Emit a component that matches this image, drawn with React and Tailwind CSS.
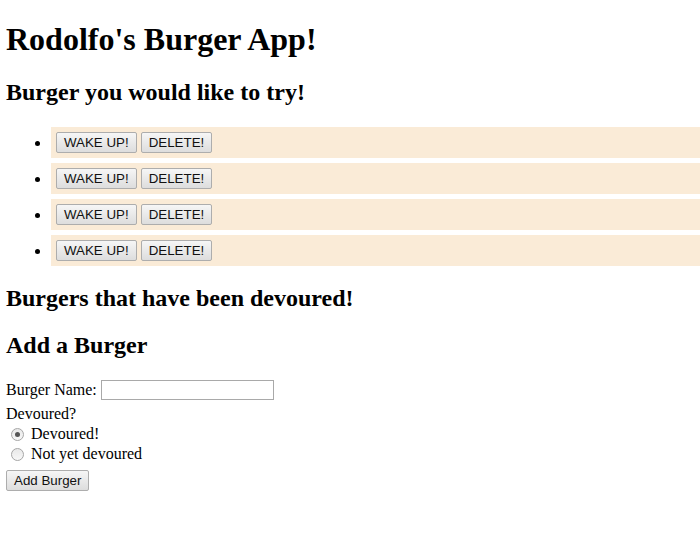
import React from "react";

const burgers = [1, 2, 3, 4];

const Btn = ({ children }) => (
  <button className="h-[21px] px-[7px] border border-[#adadad] rounded-[2px] bg-gradient-to-b from-[#f6f6f6] to-[#dddddd] text-[13.33px] leading-none text-[#111] font-['Liberation_Sans',Arial,sans-serif]">
    {children}
  </button>
);

const Radio = ({ checked }) => (
  <span className="inline-flex items-center justify-center w-[13px] h-[13px] ml-[5px] mr-[7px] rounded-full border border-[#a6a6a6] bg-gradient-to-b from-[#e8e8e8] to-[#f8f8f8]">
    {checked && <span className="w-[5px] h-[5px] rounded-full bg-[#555555]" />}
  </span>
);

const App = () => {
  return (
    <div className="min-h-[540px] bg-white pl-[6px] font-['Liberation_Serif','Times_New_Roman',serif] text-black text-base">
      {/* Header */}
      <h1 className="pt-[21px] text-[32px] font-bold leading-[37px]">Rodolfo's Burger App!</h1>
      <h2 className="mt-[21px] text-[24px] font-bold leading-[27px]">Burger you would like to try!</h2>

      {/* Burger list */}
      <ul className="mt-[21px] pl-10 list-disc">
        {burgers.map((b) => (
          <li key={b} className="ml-[5px] mb-[5px] p-[5px] bg-[#faebd7] leading-[21px]">
            <span className="inline-flex gap-1 align-top">
              <Btn>WAKE UP!</Btn>
              <Btn>DELETE!</Btn>
            </span>
          </li>
        ))}
      </ul>

      <h2 className="mt-[19px] text-[24px] font-bold leading-[27px]">Burgers that have been devoured!</h2>
      <h2 className="mt-5 text-[24px] font-bold leading-[27px]">Add a Burger</h2>

      {/* Form */}
      <form className="mt-[21px] flex flex-col items-start">
        <div className="flex items-start h-6">
          <label className="leading-[20px]">Burger Name:</label>
          <input className="ml-1 w-[173px] h-5 border border-[#a9a9a9] px-[2px] text-[13.33px] outline-none" />
        </div>
        <div className="h-5 leading-5">Devoured?</div>
        <div className="flex items-center h-5">
          <Radio checked />
          <span>Devoured!</span>
        </div>
        <div className="flex items-center h-5">
          <Radio />
          <span>Not yet devoured</span>
        </div>
        <div className="mt-1">
          <Btn>Add Burger</Btn>
        </div>
      </form>
    </div>
  );
};

export default App;
